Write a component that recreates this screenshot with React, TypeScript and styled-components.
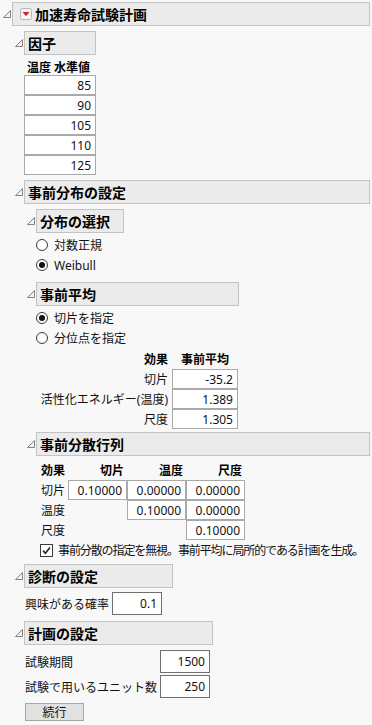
import React from "react";
import styled, { createGlobalStyle } from "styled-components";

const Global = createGlobalStyle`
  html, body { margin: 0; padding: 0; background: #f8f8f8; }
  body {
    font-family: "Noto Sans", "Noto Sans CJK JP", sans-serif;
    font-size: 12px;
    color: #111;
  }
`;

const Page = styled.div`
  width: 372px;
  box-sizing: border-box;
  padding: 2px 2px 0 0;
  display: flex;
  flex-direction: column;
`;

const Node = styled.section<{ $mt?: number }>`
  display: flex;
  flex-direction: column;
  margin-top: ${(p) => p.$mt ?? 0}px;
`;

const NodeHead = styled.div`
  display: flex;
  align-items: center;
`;

const Twisty = styled.span`
  width: 12px;
  height: 24px;
  box-sizing: border-box;
  padding-left: 3px;
  display: flex;
  align-items: center;
  flex: none;
`;

const HeadBox = styled.div<{ $w?: number }>`
  ${(p) => (p.$w ? `width: ${p.$w}px;` : "flex: 1;")}
  height: 24px;
  box-sizing: border-box;
  border: 1px solid #c3c3c3;
  background: #ebebeb;
  display: flex;
  align-items: center;
  gap: 2px;
  padding-left: 3px;
  font-weight: bold;
  font-size: 14px;
  color: #000;
  white-space: nowrap;
`;

const MenuIcon = styled.span`
  display: flex;
  margin-left: 4px;
  margin-right: 1px;
`;

const Body = styled.div<{ $pl?: number }>`
  display: flex;
  flex-direction: column;
  padding-left: ${(p) => p.$pl ?? 12}px;
`;

const ColHeader = styled.div<{ $mt?: number }>`
  margin-top: ${(p) => p.$mt ?? 0}px;
  height: 15px;
  line-height: 15px;
  font-weight: bold;
  padding-left: 3px;
  color: #000;
`;

const Cell = styled.div<{ $w?: number; $h?: number; $dark?: boolean }>`
  width: ${(p) => p.$w ?? 72}px;
  height: ${(p) => p.$h ?? 20}px;
  box-sizing: border-box;
  border: 1px solid ${(p) => (p.$dark ? "#6f6f6f" : "#a9a9a9")};
  background: #fff;
  display: flex;
  align-items: center;
  justify-content: flex-end;
  padding-right: 4px;
  color: #111;
`;

const Stack = styled.div`
  display: flex;
  flex-direction: column;
`;

const RadioGroup = styled.div<{ $mt?: number }>`
  display: flex;
  flex-direction: column;
  margin-top: ${(p) => p.$mt ?? 0}px;
`;

const RadioRow = styled.label`
  display: flex;
  align-items: center;
  gap: 6px;
  height: 20px;
`;

const RadioDot = styled.span<{ $on?: boolean }>`
  width: 12px;
  height: 12px;
  box-sizing: border-box;
  border-radius: 50%;
  border: 1px solid #3a3a3a;
  background: #fff;
  display: flex;
  align-items: center;
  justify-content: center;
  &::after {
    content: "";
    width: 6px;
    height: 6px;
    border-radius: 50%;
    background: ${(p) => (p.$on ? "#111" : "transparent")};
  }
`;

const MeanGrid = styled.div`
  display: grid;
  grid-template-columns: 132px 66px;
  grid-template-rows: 21px 20px 20px 20px;
  column-gap: 4px;
  align-items: center;
  justify-content: start;
`;

const GridLabel = styled.div<{ $align?: string; $bold?: boolean; $pr?: number }>`
  text-align: ${(p) => p.$align ?? "right"};
  font-weight: ${(p) => (p.$bold ? "bold" : "normal")};
  padding-right: ${(p) => p.$pr ?? 0}px;
  white-space: nowrap;
  color: ${(p) => (p.$bold ? "#000" : "#111")};
`;

const MatrixGrid = styled.div`
  display: grid;
  margin-top: 4px;
  margin-left: 5px;
  grid-template-columns: 27px 59px 59px 59px;
  grid-template-rows: 20px 20px 20px 20px;
  align-items: center;
  justify-content: start;
`;

const CheckRow = styled.label`
  display: flex;
  align-items: center;
  gap: 5px;
  height: 20px;
  margin-left: 4px;
  white-space: nowrap;
  letter-spacing: -1.1px;
`;

const CheckBox = styled.span`
  width: 13px;
  height: 13px;
  box-sizing: border-box;
  border: 1px solid #3a3a3a;
  background: #fff;
  display: flex;
  align-items: center;
  justify-content: center;
  flex: none;
`;

const FormGrid = styled.div<{ $mt?: number; $cols: string }>`
  display: grid;
  grid-template-columns: ${(p) => p.$cols};
  justify-content: start;
  row-gap: 2px;
  column-gap: 3px;
  margin-top: ${(p) => p.$mt ?? 0}px;
  margin-left: 1px;
  align-items: center;
`;

const Button = styled.button`
  margin-top: 5px;
  margin-left: 1px;
  width: 59px;
  height: 18px;
  box-sizing: border-box;
  border: 1px solid #a8a8a8;
  background: #e1e1e1;
  font-family: "Noto Sans", "Noto Sans CJK JP", sans-serif;
  font-size: 12px;
  color: #111;
  padding: 0;
  display: flex;
  align-items: center;
  justify-content: center;
`;

const Tri = () => (
  <svg width="8" height="8" viewBox="0 0 8 8">
    <polygon points="7.5,0.5 7.5,7.5 0.5,7.5" fill="#f2f2f2" stroke="#858585" strokeWidth="1" />
  </svg>
);

const RedMenu = () => (
  <svg width="12" height="12" viewBox="0 0 12 12">
    <rect x="0.5" y="0.5" width="11" height="11" rx="2" fill="#f7f7f7" stroke="#b4b4b4" />
    <polygon points="2.5,4 9.5,4 6,8.2" fill="#d8202a" />
  </svg>
);

const Check = () => (
  <svg width="11" height="11" viewBox="0 0 11 11">
    <path d="M2 5.6 L4.4 8.2 L9 2.4" fill="none" stroke="#222" strokeWidth="1.6" />
  </svg>
);

type OutlineProps = {
  title: string;
  w?: number;
  mt?: number;
  menu?: boolean;
  children?: React.ReactNode;
};

const Outline = ({ title, w, mt, menu, children }: OutlineProps) => (
  <Node $mt={mt}>
    <NodeHead>
      <Twisty>
        <Tri />
      </Twisty>
      <HeadBox $w={w}>
        {menu && (
          <MenuIcon>
            <RedMenu />
          </MenuIcon>
        )}
        {title}
      </HeadBox>
    </NodeHead>
    <Body>{children}</Body>
  </Node>
);

const levels = ["85", "90", "105", "110", "125"];

export default function App() {
  return (
    <>
      <Global />
      <Page>
        <Outline title="加速寿命試験計画" menu>
          <Outline title="因子" w={72} mt={5}>
            <ColHeader $mt={5}>温度 水準値</ColHeader>
            <Stack>
              {levels.map((l) => (
                <Cell key={l}>{l}</Cell>
              ))}
            </Stack>
          </Outline>

          <Outline title="事前分布の設定" mt={5}>
            <Outline title="分布の選択" w={88} mt={5}>
              <RadioGroup $mt={2}>
                <RadioRow>
                  <RadioDot />
                  対数正規
                </RadioRow>
                <RadioRow>
                  <RadioDot $on />
                  Weibull
                </RadioRow>
              </RadioGroup>
            </Outline>

            <Outline title="事前平均" w={203} mt={7}>
              <RadioGroup $mt={2}>
                <RadioRow>
                  <RadioDot $on />
                  切片を指定
                </RadioRow>
                <RadioRow>
                  <RadioDot />
                  分位点を指定
                </RadioRow>
              </RadioGroup>
              <MeanGrid>
                <GridLabel $bold>効果</GridLabel>
                <GridLabel $bold $align="center">事前平均</GridLabel>
                <GridLabel>切片</GridLabel>
                <Cell $w={66}>-35.2</Cell>
                <GridLabel>活性化エネルギー(温度)</GridLabel>
                <Cell $w={66}>1.389</Cell>
                <GridLabel>尺度</GridLabel>
                <Cell $w={66}>1.305</Cell>
              </MeanGrid>
            </Outline>

            <Outline title="事前分散行列" mt={3}>
              <MatrixGrid>
                <GridLabel $bold $align="left">効果</GridLabel>
                <GridLabel $bold $pr={3}>切片</GridLabel>
                <GridLabel $bold $pr={3}>温度</GridLabel>
                <GridLabel $bold $pr={3}>尺度</GridLabel>

                <GridLabel $align="left">切片</GridLabel>
                <Cell $w={59}>0.10000</Cell>
                <Cell $w={59}>0.00000</Cell>
                <Cell $w={59}>0.00000</Cell>

                <GridLabel $align="left">温度</GridLabel>
                <span />
                <Cell $w={59}>0.10000</Cell>
                <Cell $w={59}>0.00000</Cell>

                <GridLabel $align="left">尺度</GridLabel>
                <span />
                <span />
                <Cell $w={59}>0.10000</Cell>
              </MatrixGrid>
              <CheckRow>
                <CheckBox>
                  <Check />
                </CheckBox>
                事前分散の指定を無視。事前平均に局所的である計画を生成。
              </CheckRow>
            </Outline>
          </Outline>

          <Outline title="診断の設定" w={149} mt={4}>
            <FormGrid $mt={4} $cols="auto 50px">
              <span>興味がある確率</span>
              <Cell $w={50} $h={23} $dark>0.1</Cell>
            </FormGrid>
          </Outline>

          <Outline title="計画の設定" w={189} mt={6}>
            <FormGrid $mt={5} $cols="132px 50px">
              <span>試験期間</span>
              <Cell $w={50} $h={23} $dark>1500</Cell>
              <span>試験で用いるユニット数</span>
              <Cell $w={50} $h={23} $dark>250</Cell>
            </FormGrid>
            <Button>続行</Button>
          </Outline>
        </Outline>
      </Page>
    </>
  );
}
